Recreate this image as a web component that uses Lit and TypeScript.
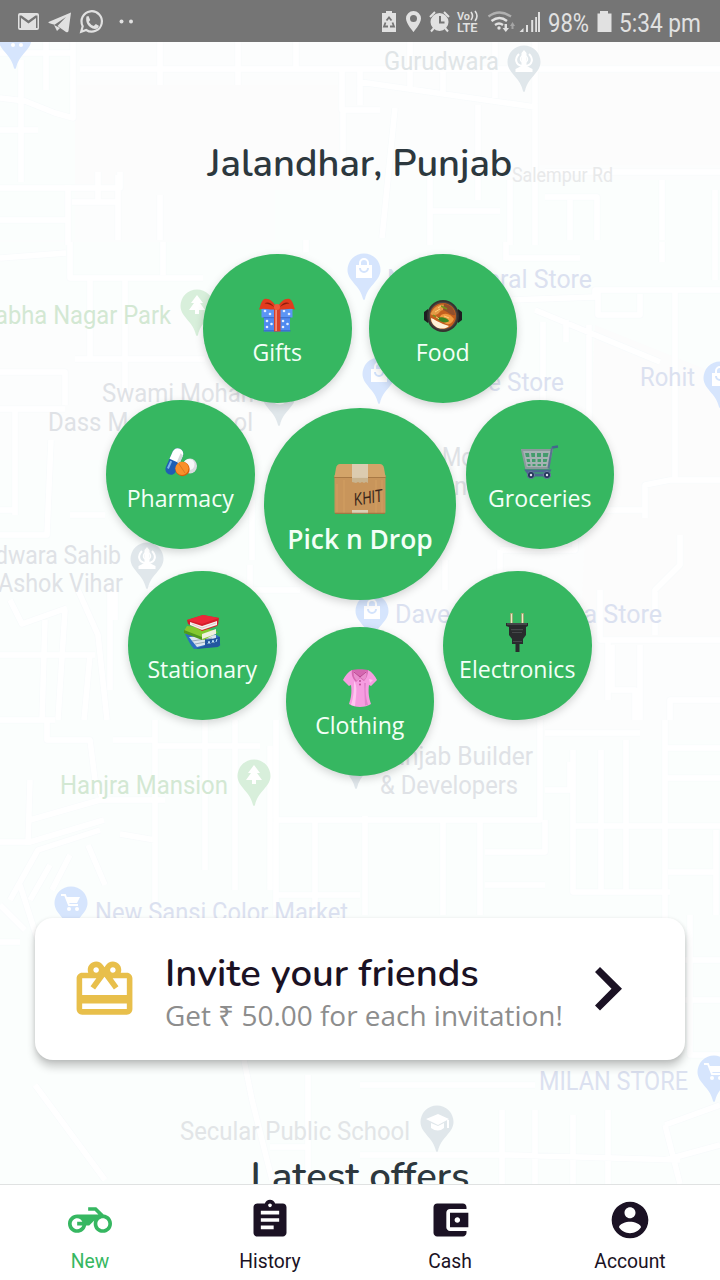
import { LitElement, html, css, svg } from "lit";
import { customElement, property } from "lit/decorators.js";

const art: Record<string, unknown> = {
  gift: svg`<svg viewBox="0 0 36 36" width="36" height="36">
    <path fill="#4f8af0" d="M5 17h26v16.500H5z"/><path fill="#5c95f5" d="M2.500 10.500h31v9h-31z"/>
    <path fill="#3565c4" opacity=".7" d="M4.500 19h27v1.300h-27zM4.500 32h27v1.500h-27z"/>
    <g fill="#e4efff"><circle cx="6" cy="13" r="1.300"/><circle cx="11" cy="16" r="1.300"/><circle cx="25" cy="13" r="1.300"/><circle cx="30" cy="16" r="1.300"/><circle cx="8" cy="23" r="1.300"/><circle cx="12.500" cy="26" r="1.300"/><circle cx="8" cy="29" r="1.300"/><circle cx="24" cy="23" r="1.300"/><circle cx="28.500" cy="26" r="1.300"/><circle cx="24" cy="29" r="1.300"/></g>
    <path fill="#d8402c" d="M15 10h6.500v23.500H15z"/><path fill="#f28a75" d="M16.200 11h1.800v22h-1.800z"/>
    <path fill="#e23b1e" d="M18 11C14 1 7-1 4 2 1.500 5 1.500 8 0 11.500c6-2.500 12 1.500 18-.5zM18 11C22 1 29-1 32 2c2.500 3 2.500 6 4 9.500-6-2.500-12 1.500-18-.5z"/>
    <path fill="#8e1c0c" d="M15 9C12 4.500 8 3.500 5.500 5.500c3.500 0 6.500 1.500 9.500 3.500zM21 9c3-4.500 7-5.500 9.500-3.500C27 5.500 24 7 21 9z"/><circle cx="18" cy="9" r="3" fill="#f0583c"/></svg>`,
  food: svg`<svg viewBox="0 0 38 36" width="38" height="36">
    <path fill="#1d1d20" d="M0 14l4-3v14l-4-3zM38 14l-4-3v14l4-3z"/><circle cx="19" cy="18" r="16" fill="#35322f"/><circle cx="19" cy="18" r="14.300" fill="#4b4541"/><circle cx="19" cy="18" r="13" fill="#c4601f"/>
    <path fill="#e59a45" d="M7.500 14c4-7 10-8 14-7 4 2 2 5-2 5s-4 5-9 5-4-1-3-3z"/><path fill="#93502c" d="M20 6c6 0 11 5 11 11-4 1-8-4-12-5z"/><path fill="#f09a3f" d="M17 17c6-3 10 0 13 4-3 7-8 6-10 3s-6-2-3-7z"/>
    <path fill="#fff2d7" d="M7 20c3 1 7 4 12 6l6 2c-3 3-7 3-11 2-4-2-7-5-7-10z"/><path fill="#3f8420" d="M13 20c4-2 11 0 12 3-3 3-10 1-12-3z"/>
    <path stroke="#ffd17a" fill="none" d="M11 14l5-3M20 18l5 2M11 18l4 3M14 10l3-2"/><path stroke="#75941f" fill="none" stroke-width="1.500" d="M17 8l6 3M9 17l3 2"/></svg>`,
  pills: svg`<svg viewBox="0 0 36 36" width="36" height="36"><g transform="rotate(24 11 18)"><rect x="6.500" y="3" width="11" height="28" rx="5.500" fill="#1f5db4"/><path fill="#fff" d="M6.500 16.500V8.500a5.500 5.500 0 0111 0v8z"/><path fill="#7cb2ee" d="M8 18h2v8H8z"/><path fill="#d5d9dc" d="M14.500 7v9.500h3V8z"/></g>
    <ellipse cx="28" cy="22" rx="7" ry="7.500" fill="#d9dbdf"/><ellipse cx="27" cy="20.500" rx="5.500" ry="5.500" fill="#f7f7f8"/><circle cx="20.500" cy="25" r="7.200" fill="#d95d09"/><circle cx="20" cy="24.300" r="6.600" fill="#f98f2b"/><path stroke="#d87a22" d="M17 20l6 9"/></svg>`,
  cart: svg`<svg viewBox="0 0 38 36" width="38" height="36"><path fill="#a6b2b4" d="M1 6h30l-3.500 17.500H5z"/><g fill="#449b6d"><path d="M4 9h4l.5 4H5zM10 9h4v4h-3.500zM16 9h4v4h-4zM22 9h5.500l-.8 4H22zM5.500 15h3.300l.4 3H6zM11 15h3.500v3H11zM16.500 15H20v3h-3.500zM22 15h4.300l-.7 3H22zM6.500 20h3v2h-2.600zM11.500 20h3v2h-3zM16.500 20H20v2h-3.500zM22 20h3.500l-.5 2h-3z"/></g>
    <path fill="none" stroke="#8c999c" stroke-width="1.800" d="M1 6h30l-4 18H5z"/><path fill="none" stroke="#42678d" stroke-width="2.600" d="M37 2.500l-6 1"/><path fill="none" stroke="#5a7390" stroke-width="2" d="M31 3.500l-3.500 21"/><path fill="none" stroke="#4d6691" stroke-width="3" d="M6 27h22l-2 4H9z"/><g fill="#24365b" stroke="#67799e"><circle cx="10" cy="31" r="3.600"/><circle cx="26" cy="31" r="3.600"/></g><circle cx="10" cy="31" r="1.200" fill="#e2e7ef"/><circle cx="26" cy="31" r="1.200" fill="#e2e7ef"/></svg>`,
  books: svg`<svg viewBox="0 0 38 36" width="38" height="36"><path fill="#2d6fc1" d="M2 19l28-1 7 4c-2 3 1 6 0 9L11 34C7 30 5 24 2 19z"/><path fill="#dbe6ee" d="M6 22l27-2v7L14 32z"/><path stroke="#9aabb9" d="M9 26l20-3M12 29l16-3"/><path fill="#2357a0" d="M22 24c8 1 12-2 15-2v8l-2 2-22 2c5-3 9-2 9-4z"/><path stroke="#b1ddff" d="M25 29l1-3 1 3M29 28l1-3 1 3M33 27l1-3"/>
    <path fill="#83c92e" d="M4 11l18 2 13 4-14 8C13 22 6 19 1 16z"/><path fill="#f0f1df" d="M19 19l14-5v5l-14 5z"/><path fill="#4f991d" d="M1 15l18 7v3L1 18z"/><path fill="#d51d2b" d="M4 5L20 0l16 3c-1 4 0 6-2 8l-15 5C13 12 7 10 5 9z"/><path fill="#f7f1ee" d="M7 7l12 4 15-5v4l-15 5L7 10z"/><path stroke="#cfc1c0" stroke-width=".8" fill="none" d="M9 9l10 4 14-5"/><path fill="#ec2939" d="M4 5L20 0l16 3-17 6z"/></svg>`,
  plug: svg`<svg viewBox="0 0 24 42" width="24" height="42"><path stroke="#b9aa79" stroke-width="2.500" d="M6.500 1v11M17.500 1v11"/><path stroke="#eee9ca" d="M6.500 2v9M17.500 2v9"/><path fill="#292b2d" d="M1 11h22v3l-2 1v8l-3 4v5h-3.500v8h-4v-8H7v-5l-3-4v-8l-3-1z"/><path fill="#45484a" d="M2 11h20v2H2zM6 17h12v1.200H6zM7 20h10v1H7zM8 29h9v1H8z"/></svg>`,
  shirt: svg`<svg viewBox="0 0 36 40" width="36" height="40"><path fill="#f69de0" d="M10 1c5 2 11 2 16 0 4 2 7 6 9 10l-6 6-2-1c-1 8 0 13 2 19-6 4-16 4-22 0 2-6 3-11 2-19l-2 1-6-6C3 7 6 3 10 1z"/><path fill="#ffc5f0" d="M12 12c4 5 2 15 1 25l-4-1c3-9 3-16 3-24zM27 10l4 1-3 3z"/><path fill="#e383cc" d="M22 14h2c-1 8 0 15 2 22l-3 .5z"/><path fill="#d567b1" d="M10 1c4-1 12-1 16 0 0 4-1 8-4 11l-4-3-4 4c-3-3-5-7-4-12z"/><path fill="#e98fce" d="M12 2l6 6-3 4c-3-3-4-6-3-10zM24 2l-6 6 4 3c3-2 3-5 2-9z"/><path stroke="#b7448d" fill="none" d="M12 3l6 5 6-5"/><circle cx="18" cy="12" r=".9" fill="#b7448d"/><circle cx="18" cy="15.500" r=".9" fill="#b7448d"/></svg>`,
  box: svg`<svg viewBox="0 0 52 50" width="52" height="50"><path fill="#c8955b" d="M.5 11h51v37q0 2-2 2h-47q-2 0-2-2z"/><path fill="#d3a469" d="M6 0h40q3 0 4 4l1.500 9H.5L2 4q1-4 4-4z"/><path stroke="#a87945" d="M0 13.500h52"/><path stroke="#dda968" opacity=".5" d="M3 20v28M10 16v33M42 16v33M48 16v33"/><path fill="#ddd0b8" opacity=".9" d="M18 0h16v14H18z"/><path fill="#c9b48f" d="M18 14h16v5l-2-1-2 1-2-1-2 1-2-1-2 1-4-1z"/><path fill="#ded0b4" d="M18 46h16v4H18z"/><path stroke="#98703e" d="M1 49.300h50"/><text x="20" y="40" textLength="29" lengthAdjust="spacingAndGlyphs" transform="rotate(-9 32 36)" fill="#38251a" font-family="Liberation Sans" font-size="18" font-style="italic" font-weight="400">KHIT</text></svg>`,
};

@customElement("service-bubble")
class ServiceBubble extends LitElement {
  @property() label = "";
  @property() icon = "";
  @property({ type: Boolean, reflect: true }) main = false;
  static styles = css`
    :host { box-sizing: border-box; width: 148.500px; height: 148.500px; padding-top: 41px; border-radius: 50%; background: #36b761; display: flex; flex-direction: column; align-items: center; color: #f3fff7; font: 23.100px/32px "Open Sans", sans-serif; box-shadow: 0 3px 8px rgba(0,0,0,.17); white-space: nowrap; }
    .icon { height: 41px; display: flex; align-items: center; }
    .icon svg { display: block; }
    :host([main]) { width: 192px; height: 192px; padding-top: 55px; font-weight: 600; font-size: 26.400px; line-height: 36px; }
    :host([main]) .icon { height: 51px; margin-bottom: 7px; }
  `;
  render() { return html`<div class="icon">${art[this.icon]}</div><div>${this.label}</div>`; }
}

const glyph = (k: string) => ({
  cart: svg`<path fill="none" stroke="#fff" stroke-width="2" d="M-10-8h4l4 10H7"/><path fill="#fff" d="M-5-6H9L6 0H-3z"/><circle cx="-2" cy="6" r="2" fill="#fff"/><circle cx="6" cy="6" r="2" fill="#fff"/>`,
  bag: svg`<path fill="#fff" d="M-8-5H8V8H-8z"/><path stroke="#fff" stroke-width="2" fill="none" d="M-4-5v-2a4 4 0 018 0v2"/><path stroke="#d3e3fc" stroke-width="2" fill="none" d="M-4-2a4 4 0 008 0"/>`,
  tree: svg`<path fill="#fff" d="M0-11l6 8H3l5 7H2v4h-4V4h-6l5-7h-3z"/>`,
  khanda: svg`<path fill="#fff" d="M0-12l2.500 3v13l6 3v3h-17V7l6-3V-9z"/><path fill="none" stroke="#fff" stroke-width="2" d="M-5-8c-5 5-3 11 3 12M5-8c5 5 3 11-3 12"/><circle cy="-3" r="3.500" stroke="#fff" stroke-width="1.500" fill="none"/>`,
  school: svg`<path fill="#fff" d="M-11-3L1-8l11 5L1 3zM-6 1v5Q1 11 7 6V1L1 4zM10-2h2v8h-2z"/>`,
}[k]);
const BLUE = "#d6e5fd", GREY = "#e0e7eb", GREEN = "#d8efdb";
const pins: [number, number, string, string][] = [
  [524, 62, GREY, "khanda"], [15, 39, BLUE, "cart"], [364, 270, BLUE, "bag"], [379, 374, BLUE, "bag"], [197, 306, GREEN, "tree"],
  [279, 396, GREY, "school"], [720, 378, BLUE, "bag"], [147, 559, GREY, "khanda"], [372, 611, BLUE, "bag"], [254, 776, GREEN, "tree"],
  [356, 759, GREY, "school"], [71, 903, BLUE, "cart"], [714, 1072, BLUE, "cart"], [437, 1122, GREY, "school"],
];
const T_GREY = "#dfe2e6", T_BLUE = "#dbe1f0", T_GREEN = "#d3e8d3";
const places: [string, number, number, number, string][] = [
  ["Gurudwara", 384, 70, 115, "#e0e5e7"],
  ["New General Store", 387, 288, 205, T_BLUE], ["e Store", 488, 391, 76, T_BLUE], ["Rohit", 640, 385.5, 55, T_BLUE],
  ["abha Nagar Park", -5, 324, 176, T_GREEN], ["Swami Mohan", 102, 402, 152, T_GREY], ["Dass Model School", 48, 431, 205, T_GREY],
  ["Mo", 442, 466, 32, T_GREY], ["n", 454, 495, 13, T_GREY], ["dwara Sahib", -5, 563.5, 126, T_GREY], ["Ashok Vihar", -2, 592, 125, T_GREY],
  ["Davender Karyana Store", 395, 623, 267, T_BLUE], ["Punjab Builder", 376, 765, 157, T_GREY], ["& Developers", 380, 793.5, 138, T_GREY],
  ["Hanjra Mansion", 60, 794, 168, T_GREEN], ["New Sansi Color Market", 95, 920.5, 253, T_BLUE], ["MILAN STORE", 539, 1090, 149, T_BLUE],
  ["Secular Public School", 180, 1139.5, 230, "#e2e5e7"],
];

@customElement("city-map")
class CityMap extends LitElement {
  static styles = css`:host, svg { display: block; } .place { font-family: Roboto, sans-serif; }`;
  render() {
    const roads = "M0 53H75M80 69H720M160 42V85M238 42V85M296 42V69M342 69V110H380M46 42V90M73 42V118L55 113 25 101 0 98M21 60V182M0 130H38M0 188H120V172M68 185V245M118 175V240M0 220H68M72 202H120M98 172V202M160 195V240M343 110V180M360 69V105M360 82L535 107M395 108L382 238M410 42V90M443 69V96M495 42V98M535 42V245M478 105V200M430 172V245M430 211H500M510 180V245M545 172H720M545 197H597V240M570 200V240M662 180V240M715 190V280M0 258L66 253M70 242V278H203M90 280V360M125 276V400M163 242V275M306 240V252M505 258H580M506 242V260M662 242V262M535 310L660 362M510 300L595 297V290H720M675 290V480M598 290V315H640V294M566 320V342M543 322V410M589 325V430M75 359H205M0 372H65V405M0 409H65M15 410V515M51 440L47 535H0M0 510H15M70 515H105M10 600L22 624 67 608M78 590L98 635 107 720M45 620L42 720M65 610L58 720M0 655H95M90 655L84 720M110 585V690M148 590H300M115 590V620M250 565V590M252 500V560M500 550H575V530M445 560V590M500 550V575M600 590V640H720M608 640V700M640 645V720M645 510H595M645 518V485L670 480H720M680 535V565L655 590V635M612 645V690H635V720M670 720V700H720M0 720H55M47 720V740H90L95 780 103 800M30 780L28 845M0 842H30L104 820M30 820L100 800H165M10 900L38 850 100 830M155 720V910M155 746H260M205 720V870M235 720V890M270 746V890M113 740H155M120 834L155 840M276 720V915M276 820H540V720M315 820V915M278 895H360M365 816V915M443 820V915M480 820V915M485 852H545V820M485 885H545M545 733H640M573 750V892H670M601 750V890M626 740V892M665 720V1000M665 748H720M665 778H720M575 826H720M716 830V915M668 872H716M545 790H570V762M0 905L25 930M20 885L60 1010M50 865L30 900M70 855L52 890M88 845L105 885M0 942H20M690 915V1055H720M675 960H720M675 1000H720M35 1085L105 1180M244 1060L252 1100 272 1180M308 1075V1180M270 1147H310M360 1085H535M360 1155H510L680 1160M502 1110V1184M535 1110V1184M573 1115V1184M608 1110V1184M665 1125L720 1105M665 1125L680 1184M665 1160L720 1145";
    return html`<svg width="720" height="1142" viewBox="0 42 720 1142">
      <rect y="42" width="720" height="1142" fill="#fcfdfd"/>
      <path fill="#fbfefd" d="M0 42H75V240H0zM275 180H720V390H275zM0 460H290V1184H0zM290 740H720V1184H290zM0 242H720V310H0z"/>
      <path fill="#fcfcfc" d="M540 42H720V165H540zM75 85H340V190H75zM595 325L720 375V640H580z"/>
      <path fill="none" stroke="#f8fbfc" stroke-width="7" stroke-linejoin="round" d=${roads}/>
      <path fill="none" stroke="#fff" stroke-width="5.500" stroke-linejoin="round" d=${roads}/>
      ${pins.map(([x, y, c, k]) => svg`<g transform="translate(${x} ${y})"><path fill=${c} d="M-16.500 0a16.500 16.500 0 1133 0C16.500 11 4 15 1 29q-1 2-2 0C-4 15-16.500 11-16.500 0z"/>${glyph(k)}</g>`)}
      ${places.map(([t, x, y, w, c]) => svg`<text class="place" x=${x} y=${y} font-size="25" fill=${c} textLength=${w} lengthAdjust="spacingAndGlyphs">${t}</text>`)}
      <text class="place" x="512" y="181.500" font-size="19.500" fill="#e8e9ea" textLength="101" lengthAdjust="spacingAndGlyphs">Salempur Rd</text>
    </svg>`;
  }
}

const nav = [
  ["New", "M19.440 9.030L15.410 5H11v2h3.590l2 2H5c-2.800 0-5 2.200-5 5s2.200 5 5 5c2.460 0 4.450-1.690 4.900-4h1.650l2.770-2.770c-.21.54-.32 1.140-.32 1.770 0 2.800 2.200 5 5 5s5-2.200 5-5c0-2.650-1.970-4.770-4.560-4.970zM7.820 15C7.400 16.150 6.280 17 5 17c-1.630 0-3-1.370-3-3s1.370-3 3-3c1.280 0 2.400.85 2.820 2H5v2h2.820zM19 17c-1.660 0-3-1.340-3-3s1.340-3 3-3 3 1.340 3 3-1.340 3-3 3z"],
  ["History", "M19 3h-4.180C14.400 1.840 13.300 1 12 1c-1.300 0-2.400.84-2.820 2H5c-1.100 0-2 .9-2 2v14c0 1.100.9 2 2 2h14c1.100 0 2-.9 2-2V5c0-1.100-.9-2-2-2zm-7 0c.55 0 1 .45 1 1s-.45 1-1 1-1-.45-1-1 .45-1 1-1zm2 14H7v-2h7v2zm3-4H7v-2h10v2zm0-4H7V7h10v2z"],
  ["Cash", "M21 18v1c0 1.100-.9 2-2 2H5c-1.110 0-2-.9-2-2V5c0-1.100.89-2 2-2h14c1.100 0 2 .9 2 2v1h-9c-1.110 0-2 .9-2 2v8c0 1.100.89 2 2 2h9zm-9-2h10V8H12v8zm4-2.500c-.83 0-1.500-.67-1.500-1.500s.67-1.500 1.500-1.500 1.500.67 1.500 1.500-.67 1.500-1.500 1.500z"],
  ["Account", "M12 2C6.480 2 2 6.480 2 12s4.480 10 10 10 10-4.480 10-10S17.520 2 12 2zm0 3c1.660 0 3 1.340 3 3s-1.340 3-3 3-3-1.340-3-3 1.340-3 3-3zm0 14.200c-2.500 0-4.710-1.280-6-3.220.03-1.990 4-3.080 6-3.080 1.990 0 5.970 1.090 6 3.080-1.290 1.940-3.500 3.220-6 3.220z"],
];

@customElement("app-root")
class AppRoot extends LitElement {
  static styles = css`
    :host { display: flex; flex-direction: column; width: 720px; height: 1280px; overflow: hidden; background: #fff; }
    .status { height: 42px; flex: none; background: #757575; display: flex; justify-content: space-between; }
    .status svg { display: block; font-family: Roboto, sans-serif; }
    main { position: relative; flex: 1; min-height: 0; overflow: hidden; }
    city-map { position: absolute; inset: 0; }
    .content { position: relative; display: flex; flex-direction: column; align-items: center; }
    h1, h2, h3 { margin: 0; font-family: Nunito, Lato, sans-serif; font-weight: 600; font-size: 38.100px; line-height: 48px; color: #2d383e; white-space: nowrap; }
    h1 { margin-top: 97px; }
    .services { position: relative; width: 508px; height: 522px; margin-top: 67px; }
    service-bubble { position: absolute; }
    .b0 { left: 97px; top: 0; } .b1 { left: 262.500px; top: 0; }
    .b2 { left: 0; top: 146px; } .b3 { left: 359.500px; top: 146px; }
    .b4 { left: 158px; top: 154px; }
    .b5 { left: 22px; top: 317px; } .b6 { left: 337px; top: 317px; }
    .b7 { left: 179.500px; top: 373px; }
    .invite { box-sizing: border-box; width: 650px; height: 142px; margin-top: 142px; padding: 0 57px 0 36px; border-radius: 18px; background: #fff; box-shadow: 0 7px 8px rgba(0,0,0,.2), 0 1px 4px rgba(0,0,0,.11); display: flex; align-items: center; }
    .invite svg { flex: none; display: block; }
    .copy { flex: 1; padding: 5px 0 0 27px; }
    h3 { color: #1b1224; height: 46px; font-size: 38.300px; }
    .copy p { margin: 0; font: 27.950px/38px "Open Sans", sans-serif; color: #8d8d8d; white-space: nowrap; }
    h2 { margin-top: 93px; font-size: 38.400px; }
    nav { flex: none; height: 96px; box-sizing: border-box; background: #fff; display: grid; grid-template-columns: repeat(4, 1fr); border-top: 1px solid #e0e2e2; }
    .tab { display: flex; flex-direction: column; align-items: center; padding-top: 13px; gap: 7px; color: #1b1224; font: 19.300px/26px Roboto, sans-serif; }
    .tab svg { display: block; }
    .tab:first-child { color: #36b761; }
  `;
  render() {
    const c = "#e1e1e1";
    const items = [["Gifts", "gift"], ["Food", "food"], ["Pharmacy", "pills"], ["Groceries", "cart"], ["Pick n Drop", "box"], ["Stationary", "books"], ["Electronics", "plug"], ["Clothing", "shirt"]];
    return html`
      <div class="status">
        <svg width="150" height="42" viewBox="0 0 150 42" fill=${c}>
          <path fill-rule="evenodd" d="M20 13h17q2 0 2 2v13q0 2-2 2H20q-2 0-2-2V15q0-2 2-2zm1 15V18l7.500 5.500L36 18v10h1.500V15.500h-2l-7 5-7-5h-2V28z"/>
          <path d="M71 12.500L48.500 22q-.5.700 1 1.200l5 1.500L66 17l-8.500 9 8.500 6q2 1 2.500-1z"/><path d="M54 25l3 6 3-3z"/>
          <path fill="none" stroke=${c} stroke-width="2.200" d="M81.200 31.700l1.500-5.500a10.200 10.200 0 113.500 3.800z"/><path d="M86.500 16.500l2-.5 1.700 4-1.400 2q2 3 5 4l2-2 3 1.700q0 3-4 3.300c-6-1-9.800-6-8.300-12.500z"/>
          <circle cx="121.500" cy="21.500" r="2"/><circle cx="131" cy="21.500" r="2"/>
        </svg>
        <svg width="350" height="42" viewBox="370 0 350 42" fill=${c}>
          <path d="M386 11h6v2h4v19h-14V13h4z"/><path fill="none" stroke="#757575" stroke-width="1.800" d="M386.500 20.500l2.500-3 2.500 3M385.500 22.500l-1.500 4h4M392.500 22.500l1.500 4h-4"/>
          <path fill-rule="evenodd" d="M413.500 11a7.500 7.500 0 00-7.500 7.500c0 5 7.500 13.500 7.500 13.500s7.500-8.500 7.500-13.500a7.500 7.500 0 00-7.500-7.500zm0 4a3.500 3.500 0 110 7 3.500 3.500 0 010-7z"/>
          <circle cx="439.500" cy="22" r="9"/><path fill="none" stroke="#757575" stroke-width="2" d="M440 16v6.500h4.500"/><path fill="none" stroke=${c} stroke-width="2" d="M430 17l5-5M449 17l-5-5M434 28l-3 3.500M445 28l3 3.500"/>
          <text x="457" y="20" font-size="11.500" font-weight="600" textLength="13" lengthAdjust="spacingAndGlyphs">Vo</text><path fill="none" stroke=${c} stroke-width="1.600" d="M471 12q3 4 0 8M475 11q4 5 0 10"/><text x="457" y="32" font-size="12" font-weight="600" textLength="20.500" lengthAdjust="spacingAndGlyphs">LTE</text>
          <path fill="none" stroke="#b0b0b0" stroke-width="2.300" d="M488.500 16.500q11-8 22.500 0"/><path fill="none" stroke=${c} stroke-width="2.300" d="M491.500 21q8-6 15.500 0M495 25q4-3 8 0"/><circle cx="499" cy="28" r="1.700"/><path d="M504.500 24h2.500v4h2l-3.200 4-3.200-4h2z"/><path fill="#a5a5a5" d="M511.500 29v-3h-1.500l2.500-4 2.500 4h-1.500v3z"/>
          <path d="M519.500 32l4-4v4zM526 25h2v7h-2zM531.200 20h2v12h-2zM535.200 17h1.800v15h-1.800zM538 12h2v20h-2z"/>
          <text x="548" y="32" font-size="26" textLength="41" lengthAdjust="spacingAndGlyphs">98%</text>
          <path d="M600 11h8v2.500h3.500V32h-14V13.500h2.500z"/>
          <text x="619" y="32" font-size="26" textLength="82" lengthAdjust="spacingAndGlyphs">5:34 pm</text>
        </svg>
      </div>
      <main>
        <city-map></city-map>
        <div class="content">
          <h1>Jalandhar, Punjab</h1>
          <div class="services">${items.map(([l, i], n) => html`<service-bubble class="b${n}" label=${l} icon=${i} ?main=${n === 4}></service-bubble>`)}</div>
          <section class="invite">
            <svg width="67" height="67" viewBox="0 0 24 24" fill="#e8bf4b"><path d="M20 6h-2.180c.11-.31.18-.65.18-1 0-1.660-1.340-3-3-3-1.050 0-1.960.54-2.500 1.350l-.5.67-.5-.68C10.960 2.540 10.050 2 9 2 7.340 2 6 3.340 6 5c0 .35.07.69.18 1H4c-1.110 0-1.990.89-1.990 2L2 19c0 1.110.89 2 2 2h16c1.110 0 2-.89 2-2V8c0-1.110-.89-2-2-2zm-5-2c.55 0 1 .45 1 1s-.45 1-1 1-1-.45-1-1 .45-1 1-1zM9 4c.55 0 1 .45 1 1s-.45 1-1 1-1-.45-1-1 .45-1 1-1zm11 15H4v-2h16v2zm0-5H4V8h5.080L7 10.830 8.620 12 11 8.760l1-1.360 1 1.360L15.380 12 17 10.830 14.920 8H20v6z"/></svg>
            <div class="copy"><h3>Invite your friends</h3><p>Get ₹ 50.00 for each invitation!</p></div>
            <svg width="34" height="44" viewBox="0 0 34 44" fill="#1b1224"><path d="M6 0l22 21.800L6 43.500 1 38.500 17.500 21.800 1 5z"/></svg>
          </section>
          <h2>Latest offers</h2>
        </div>
      </main>
      <nav>${nav.map(([l, d]) => html`<div class="tab"><svg width="44" height="44" viewBox="0 0 24 24" fill="currentColor"><path d=${d}/></svg><span>${l}</span></div>`)}</nav>`;
  }
}
